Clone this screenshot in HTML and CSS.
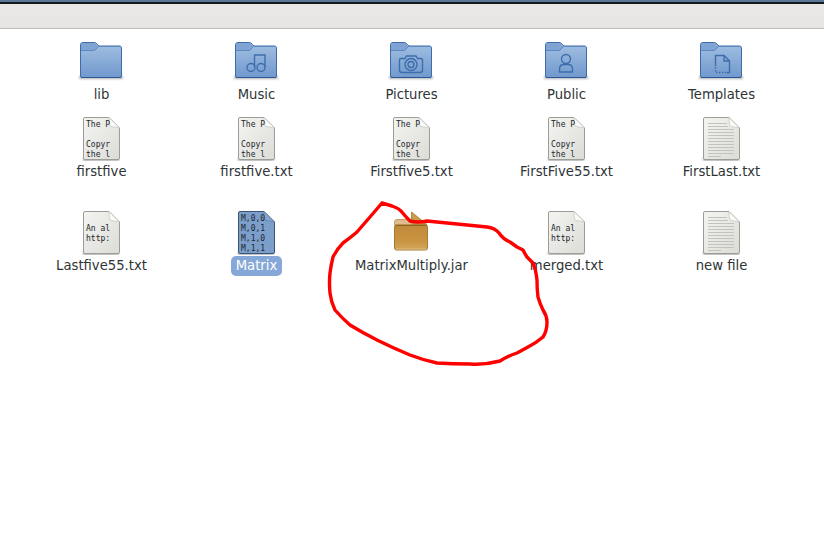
FILE: index.html
```html
<!doctype html>
<html>
<head>
<meta charset="UTF-8">
<title>Files</title>
<link rel="stylesheet" href="styles.css">
</head>
<body>
	<svg class="defs" width="0" height="0">
		<defs>
			<linearGradient id="folderfill" x1="0" y1="0" x2="0" y2="1">
				<stop offset="0" stop-color="#a3c0e2"/>
				<stop offset="1" stop-color="#7099cd"/>
			</linearGradient>
			<linearGradient id="pagefill" x1="0" y1="0" x2="1" y2="1">
				<stop offset="0" stop-color="#f4f4f1"/>
				<stop offset="1" stop-color="#dcdcd7"/>
			</linearGradient>
			<linearGradient id="jarfill" x1="0" y1="0" x2="0" y2="1">
				<stop offset="0" stop-color="#c08a3d"/>
				<stop offset=".6" stop-color="#c9933f"/>
				<stop offset="1" stop-color="#d4a65e"/>
			</linearGradient>
			<filter id="soft" x="-20%" y="-100%" width="140%" height="300%">
				<feGaussianBlur stdDeviation="1"/>
			</filter>
			<symbol id="folder" viewBox="0 0 48 48">
				<rect x="1" y="40" width="44" height="3" fill="#000" opacity=".3" filter="url(#soft)"/>
				<path d="M2.5 12 V8.5 Q2.5 6.5 5 6.5 H16 Q18 6.5 19.5 8.5 L21 10 H41.5 Q43.5 10 43.5 12 V40 Q43.5 41.5 42 41.5 H4 Q2.5 41.5 2.5 40 Z" fill="url(#folderfill)" stroke="#3e6ca9"/>
				<path d="M3 14 V9 Q3 7 5 7 H16 Q18 7 19 9 L20.5 10.5 L17 14.5 Z" fill="#7fa3d3"/>
				<path d="M3 14.5 H16.5 L20.5 10.5 H43" fill="none" stroke="#5c88c0"/>
				<path d="M3 41.5 H43" stroke="#2b5797" stroke-width="1.2"/>
			</symbol>
			<symbol id="page" viewBox="0 0 48 48">
				<rect x="5" y="45" width="36" height="3" fill="#000" opacity=".35" filter="url(#soft)"/>
				<path d="M7 4.5 H31 L41.5 15 V45 Q41.5 46.5 40 46.5 H7 Q5.5 46.5 5.5 45 V6 Q5.5 4.5 7 4.5 Z" fill="url(#pagefill)" stroke="#9d9d98"/>
				<path d="M31 4.5 Q31 13 33 13.5 Q37 14 41.5 15 Z" fill="#fbfbfa" stroke="#c2c2bd" stroke-width=".7"/>
			</symbol>
			<symbol id="lines" viewBox="0 0 48 48">
				<path d="M10 10.5 H29 M10 13.5 H30 M10 16.5 H36 M10 19.5 H36 M10 22.5 H36 M10 25.5 H36 M10 28.5 H36 M10 31.5 H36 M10 34.5 H36 M10 37.5 H36 M10 40.5 H36 M10 43.5 H23" stroke="#c3c3be"/>
			</symbol>
		</defs>
	</svg>

	<div class="topline"></div>
	<div class="toolbar"></div>

	<div class="icons">
		<div class="item">
			<svg class="icon" viewBox="0 0 48 48"><use href="#folder"/></svg>
			<div class="name">lib</div>
		</div>
		<div class="item">
			<svg class="icon" viewBox="0 0 48 48">
				<use href="#folder"/>
				<g class="emblem">
					<circle cx="18" cy="31.5" r="4"/>
					<circle cx="28" cy="31.5" r="4"/>
					<path d="M21.5 31 V19 H32 V31"/>
				</g>
			</svg>
			<div class="name">Music</div>
		</div>
		<div class="item">
			<svg class="icon" viewBox="0 0 48 48">
				<use href="#folder"/>
				<g class="emblem">
					<path d="M13 22.5 H17 L18.5 20 H28 L29.5 22.5 H33 Q34.5 22.5 34.5 24 V34 Q34.5 36.5 32 36.5 H14 Q11.5 36.5 11.5 34 V24 Q11.5 22.5 13 22.5 Z"/>
					<circle cx="23" cy="28.5" r="6"/>
					<circle cx="23" cy="28.5" r="3"/>
				</g>
			</svg>
			<div class="name">Pictures</div>
		</div>
		<div class="item">
			<svg class="icon" viewBox="0 0 48 48">
				<use href="#folder"/>
				<g class="emblem">
					<circle cx="23" cy="23" r="4.5"/>
					<path d="M16.5 36 V33 Q16.5 28.5 21 28.5 H25 Q29.5 28.5 29.5 33 V36 Z"/>
				</g>
			</svg>
			<div class="name">Public</div>
		</div>
		<div class="item">
			<svg class="icon" viewBox="0 0 48 48">
				<use href="#folder"/>
				<g class="emblem">
					<path d="M17.5 30 V19.5 H26 L31.5 25 V36.5 H29"/>
					<path d="M26 19.5 V25 H31.5"/>
					<path class="dots" d="M17.5 31 V36.5 H29"/>
				</g>
			</svg>
			<div class="name">Templates</div>
		</div>

		<div class="item">
			<svg class="icon" viewBox="0 0 48 48">
				<use href="#page"/>
				<text class="peek" x="8" y="14">The P</text>
				<text class="peek" x="8" y="34">Copyr</text>
				<text class="peek" x="8" y="44">the l</text>
			</svg>
			<div class="name">firstfive</div>
		</div>
		<div class="item">
			<svg class="icon" viewBox="0 0 48 48">
				<use href="#page"/>
				<text class="peek" x="8" y="14">The P</text>
				<text class="peek" x="8" y="34">Copyr</text>
				<text class="peek" x="8" y="44">the l</text>
			</svg>
			<div class="name">firstfive.txt</div>
		</div>
		<div class="item">
			<svg class="icon" viewBox="0 0 48 48">
				<use href="#page"/>
				<text class="peek" x="8" y="14">The P</text>
				<text class="peek" x="8" y="34">Copyr</text>
				<text class="peek" x="8" y="44">the l</text>
			</svg>
			<div class="name">Firstfive5.txt</div>
		</div>
		<div class="item">
			<svg class="icon" viewBox="0 0 48 48">
				<use href="#page"/>
				<text class="peek" x="8" y="14">The P</text>
				<text class="peek" x="8" y="34">Copyr</text>
				<text class="peek" x="8" y="44">the l</text>
			</svg>
			<div class="name">FirstFive55.txt</div>
		</div>
		<div class="item">
			<svg class="icon" viewBox="0 0 48 48">
				<use href="#page"/>
				<use href="#lines"/>
			</svg>
			<div class="name">FirstLast.txt</div>
		</div>

		<div class="item">
			<svg class="icon" viewBox="0 0 48 48">
				<use href="#page"/>
				<text class="peek" x="8" y="24">An al</text>
				<text class="peek" x="8" y="34">http:</text>
			</svg>
			<div class="name">Lastfive55.txt</div>
		</div>
		<div class="item">
			<svg class="icon" viewBox="0 0 48 48">
				<rect x="5" y="45" width="36" height="3" fill="#000" opacity=".35" filter="url(#soft)"/>
				<path d="M7 4.5 H31 L41.5 15 V45 Q41.5 46.5 40 46.5 H7 Q5.5 46.5 5.5 45 V6 Q5.5 4.5 7 4.5 Z" fill="#7b9ecb" stroke="#3d5474"/>
				<path d="M31 4.5 Q31 13 33 13.5 Q37 14 41.5 15 Z" fill="#88a6ce" stroke="#5f7ea8" stroke-width=".7"/>
				<text class="peek" x="8" y="14">M,0,0</text>
				<text class="peek" x="8" y="24">M,0,1</text>
				<text class="peek" x="8" y="34">M,1,0</text>
				<text class="peek" x="8" y="44">M,1,1</text>
			</svg>
			<div class="name selected">Matrix</div>
		</div>
		<div class="item">
			<svg class="icon" viewBox="0 0 48 48">
				<path d="M23.5 5 L39 17.5 H23.5 Z" fill="#c99c4e" stroke="#a87a2c" stroke-width=".8"/>
				<path d="M6.5 18 V15 Q6.5 12.5 9 12.5 H24 V18 Z" fill="#dfbd8e" stroke="#b78f58" stroke-width=".8"/>
				<rect x="6.5" y="18" width="33" height="25" rx="2" fill="url(#jarfill)" stroke="#a47a35"/>
				<path d="M7 18.5 H39" stroke="#8f6620" stroke-width="1"/>
				<path d="M7.5 42 H38.5" stroke="#e3c48f" stroke-width=".8"/>
			</svg>
			<div class="name">MatrixMultiply.jar</div>
		</div>
		<div class="item">
			<svg class="icon" viewBox="0 0 48 48">
				<use href="#page"/>
				<text class="peek" x="8" y="24">An al</text>
				<text class="peek" x="8" y="34">http:</text>
			</svg>
			<div class="name">merged.txt</div>
		</div>
		<div class="item">
			<svg class="icon" viewBox="0 0 48 48">
				<use href="#page"/>
				<use href="#lines"/>
			</svg>
			<div class="name">new file</div>
		</div>
	</div>

	<!-- the hand drawn circle around the jar -->
	<svg class="scribble" width="824" height="547" viewBox="0 0 824 547">
		<path d="M382 203 L392 206 Q398 208 401 211 Q405 216 410 221 Q418 223 427 221 L447 223 L467 225 L487 227 Q495 228 499 233 Q503 239 510 242 L517 247 L523 250 Q525 254 527 257 L533 263 Q536 270 537 280 Q537 290 538 297 Q540 304 543 310 Q547 316 547 322 Q547 331 543 337 Q536 343 528 347 L517 353 Q508 356 500 361 Q485 365 470 364 Q453 364 437 363 Q423 360 410 355 Q393 348 377 340 Q363 333 350 325 Q342 318 335 310 Q331 302 330 293 Q329 283 330 273 Q331 265 333 257 Q337 249 343 243 Q350 238 357 232 Q363 225 370 217 Q376 210 382 203"/>
	</svg>
</body>
</html>
```
FILE: styles.css
```css
* {
	box-sizing: border-box;
}
body {
	margin: 0;
	background-color: #ffffff;
	font-family: "DejaVu Sans", sans-serif;
	overflow: hidden;
}
.defs {
	display: block;
	height: 0;
}
.topline {
	height: 4px;
	background: linear-gradient(#5b7696 0, #5b7696 2px, #15181c 2px, #15181c 4px);
}
.toolbar {
	height: 25px;
	background: linear-gradient(#e9e8e6, #e6e5e3);
	border-bottom: 1px solid #bdbcb8;
}
.icons {
	display: grid;
	grid-template-columns: repeat(5, 155px);
	grid-template-rows: 77px 94px 94px;
	padding: 7px 0 0 24px;
}
.item {
	display: flex;
	flex-direction: column;
	align-items: center;
}
.icon {
	display: block;
	width: 48px;
	height: 48px;
	overflow: hidden;
}
.name {
	margin-top: 4px;
	font-size: 13.2px;
	line-height: 14px;
	color: #2e3436;
	white-space: nowrap;
}
.selected {
	margin-top: 1px;
	padding: 3px 5px;
	border-radius: 5px;
	background-color: #86a8d8;
	color: #ffffff;
}
.peek {
	font-family: "DejaVu Sans Mono", monospace;
	font-size: 8px;
	fill: #20262b;
}
.emblem {
	fill: none;
	stroke: #3f6dac;
	stroke-width: 1.4;
}
.dots {
	stroke-dasharray: 1.5 1.5;
}
.scribble {
	position: absolute;
	left: 0;
	top: 0;
	fill: none;
	stroke: #ff0000;
	stroke-width: 3.4;
	stroke-linejoin: round;
	stroke-linecap: round;
}
```
